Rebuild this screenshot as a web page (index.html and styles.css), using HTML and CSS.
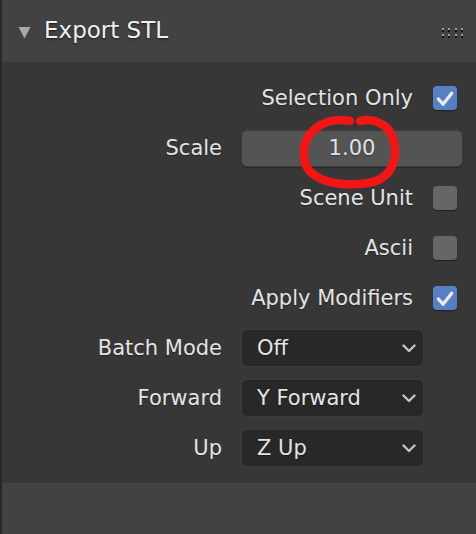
FILE: index.html
```html
<!DOCTYPE html>
<html>
<head>
<meta charset="utf-8">
<link rel="stylesheet" href="styles.css">
</head>
<body>
<div class="panel">
  <div class="header">
    <svg class="disclosure" width="13" height="13" viewBox="0 0 13 13"><path d="M0.5 1 L12.5 1 L6.5 12.5 Z" fill="#a9a9a9"/></svg>
    <span class="title">Export STL</span>
    <div class="grip">
      <span></span><span></span><span></span><span></span>
      <span></span><span></span><span></span><span></span>
    </div>
  </div>
  <div class="content">
    <div class="row check-row">
      <span class="label">Selection Only</span>
      <span class="checkbox on"><svg width="25" height="25" viewBox="0 0 25 25"><path d="M5.5 13.5 L10.5 19 L19.5 7.5" fill="none" stroke="#ebebeb" stroke-width="3.4" stroke-linecap="round" stroke-linejoin="round"/></svg></span>
    </div>
    <div class="row prop-row">
      <span class="label">Scale</span>
      <div class="numfield">1.00</div>
    </div>
    <div class="row check-row">
      <span class="label">Scene Unit</span>
      <span class="checkbox"></span>
    </div>
    <div class="row check-row">
      <span class="label">Ascii</span>
      <span class="checkbox"></span>
    </div>
    <div class="row check-row">
      <span class="label">Apply Modifiers</span>
      <span class="checkbox on"><svg width="25" height="25" viewBox="0 0 25 25"><path d="M5.5 13.5 L10.5 19 L19.5 7.5" fill="none" stroke="#ebebeb" stroke-width="3.4" stroke-linecap="round" stroke-linejoin="round"/></svg></span>
    </div>
    <div class="row prop-row">
      <span class="label">Batch Mode</span>
      <div class="dropdown"><span>Off</span><svg width="14" height="9" viewBox="0 0 14 9"><path d="M1.5 1.5 L7 7 L12.5 1.5" fill="none" stroke="#c4c4c4" stroke-width="2.4" stroke-linecap="round" stroke-linejoin="round"/></svg></div>
    </div>
    <div class="row prop-row">
      <span class="label">Forward</span>
      <div class="dropdown"><span>Y Forward</span><svg width="14" height="9" viewBox="0 0 14 9"><path d="M1.5 1.5 L7 7 L12.5 1.5" fill="none" stroke="#c4c4c4" stroke-width="2.4" stroke-linecap="round" stroke-linejoin="round"/></svg></div>
    </div>
    <div class="row prop-row">
      <span class="label">Up</span>
      <div class="dropdown"><span>Z Up</span><svg width="14" height="9" viewBox="0 0 14 9"><path d="M1.5 1.5 L7 7 L12.5 1.5" fill="none" stroke="#c4c4c4" stroke-width="2.4" stroke-linecap="round" stroke-linejoin="round"/></svg></div>
    </div>
  </div>
  <div class="footer"></div>
</div>
<svg class="annotation" width="476" height="534" viewBox="0 0 476 534">
  <path d="M350 121 C324 116 302 132 304 157 C306 182 340 187 368 183 C393 179 399 157 393 138 C388 123 372 118 360 121" fill="none" stroke="#f01616" stroke-width="8.5" stroke-linecap="round"/>
</svg>
</body>
</html>
```

FILE: styles.css
```css
html, body {
  margin: 0;
  padding: 0;
}
body {
  width: 476px;
  height: 534px;
  background: #373737;
  font-family: "DejaVu Sans", "Liberation Sans", sans-serif;
  color: #e6e6e6;
  overflow: hidden;
  position: relative;
}
.panel {
  height: 534px;
  border-left: 2px solid #282828;
  display: flex;
  flex-direction: column;
}
.header {
  height: 62px;
  flex: none;
  background: #424242;
  display: flex;
  align-items: center;
  padding-left: 16px;
  padding-right: 13px;
  box-sizing: border-box;
}
.disclosure {
  margin-top: 3px;
}
.title {
  margin-left: 13px;
  font-size: 23px;
  color: #f0f0f0;
  text-shadow: 0 1px 2px rgba(0,0,0,0.6);
  flex: 1;
  padding-bottom: 2px;
}
.grip {
  display: grid;
  grid-template-columns: repeat(4, 2px);
  grid-auto-rows: 4px;
  column-gap: 4.3px;
  row-gap: 2px;
  margin-top: 3px;
}
.grip span {
  width: 2px;
  height: 4px;
  background: linear-gradient(#9a9a9a 0 2px, #111111 2px 4px);
}
.content {
  flex: none;
  padding: 11px 0 10px;
  background: #373737;
}
.row {
  height: 50px;
  display: flex;
  align-items: center;
  font-size: 21px;
  color: #e4e4e4;
  text-shadow: 0 1px 1px rgba(0,0,0,0.35);
}
.check-row {
  justify-content: flex-end;
  padding-right: 19px;
  gap: 20px;
}
.checkbox {
  width: 24px;
  height: 24px;
  border-radius: 4px;
  background: #666666;
  box-shadow: 0 1px 1px rgba(0,0,0,0.45);
  display: flex;
  align-items: center;
  justify-content: center;
}
.checkbox.on {
  background: #5680c2;
}
.checkbox svg {
  width: 24px;
  height: 24px;
}
.prop-row {
  display: grid;
  grid-template-columns: 220px auto;
  column-gap: 19px;
  align-items: center;
}
.prop-row .label {
  text-align: right;
}
.numfield {
  width: 222px;
  height: 37px;
  box-sizing: border-box;
  background: #545454;
  border: 1px solid #3d3d3d;
  border-radius: 6px;
  display: flex;
  align-items: center;
  justify-content: center;
  color: #e2e2e2;
  box-shadow: 0 1px 1px rgba(0,0,0,0.3);
}
.dropdown {
  width: 183px;
  height: 38px;
  box-sizing: border-box;
  background: #282828;
  border: 1px solid #3c3c3c;
  border-radius: 6px;
  display: flex;
  align-items: center;
  justify-content: space-between;
  padding: 0 7px 0 15px;
  color: #e4e4e4;
}
.footer {
  flex: 1;
  background: #424242;
}
.annotation {
  position: absolute;
  left: 0;
  top: 0;
  pointer-events: none;
}
```
